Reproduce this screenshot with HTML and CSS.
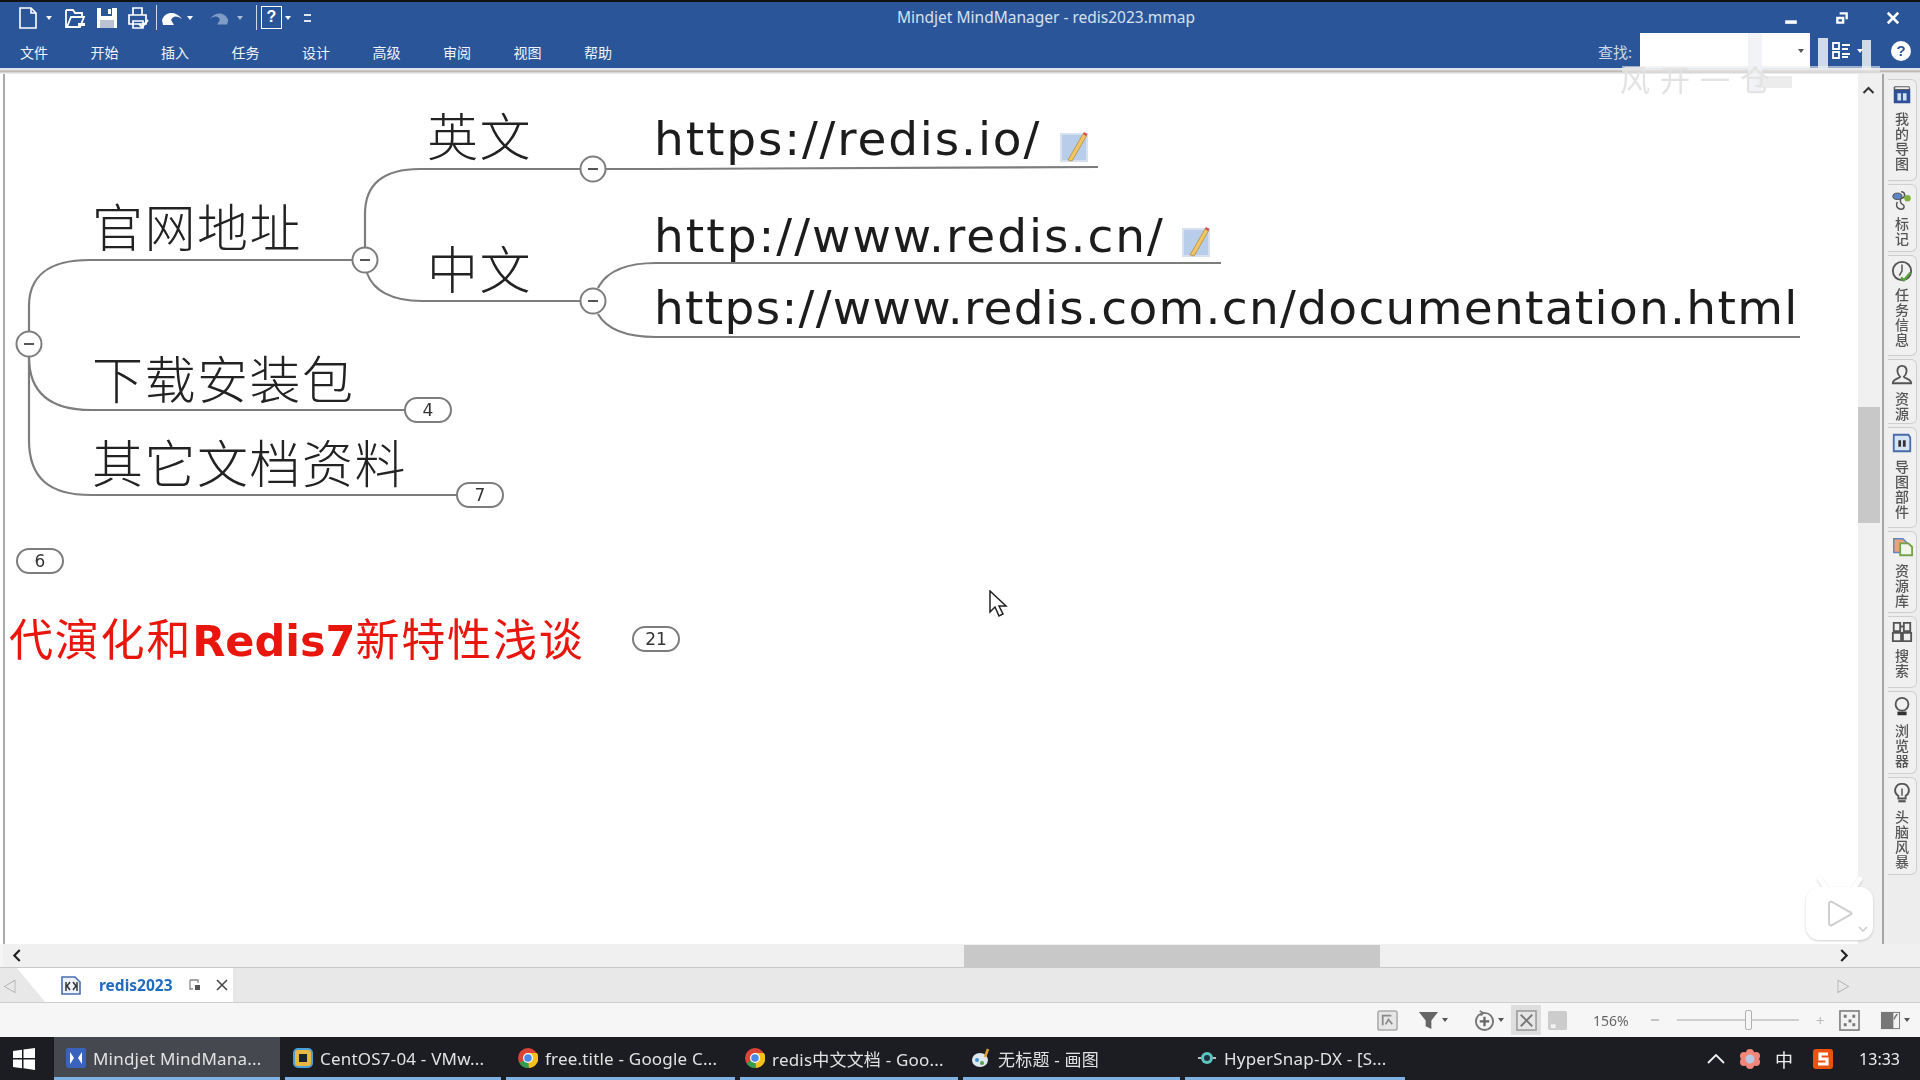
FILE: index.html
```
<!DOCTYPE html>
<html lang="zh">
<head>
<meta charset="utf-8">
<title>Mindjet MindManager - redis2023.mmap</title>
<link rel="stylesheet" href="styles.css">
</head>
<body>
<div class="app">
  <header class="ribbon">
    <div class="titlerow">
      <div class="qat">
        <svg class="q q-new" viewBox="0 0 20 24"><path d="M2 2h11l5 5v15H2z M13 2v5h5" fill="none" stroke="#fff" stroke-width="1.6"/></svg>
        <i class="caret"></i>
        <svg class="q q-open" viewBox="0 0 24 24"><path d="M3 4h7l2 3h7v4M3 4v17h14l4-10H8L4 21" fill="none" stroke="#fff" stroke-width="1.8"/><path d="M15 17h7v3h-7z" fill="#fff"/></svg>
        <svg class="q q-save" viewBox="0 0 22 24"><path d="M1 2h20v20H1z" fill="#fff"/><path d="M5 2h11v8H5z" fill="#2a5699"/><path d="M12 3h3v5h-3z" fill="#fff"/><path d="M4 14h14v8H4z" fill="#b9c3d2"/></svg>
        <svg class="q q-print" viewBox="0 0 24 24"><path d="M7 2h9v7H7zM3 9h17v9H3zM7 15h10v7H7z" fill="none" stroke="#fff" stroke-width="1.7"/><path d="M13 18l3 3 6-7" fill="none" stroke="#fff" stroke-width="2"/></svg>
        <span class="qsep"></span>
        <svg class="q q-undo" viewBox="0 0 24 20"><path d="M2 12c3-8 13-10 20-1-6-4-9-3-11 1l3 5H3z" fill="#fff"/></svg>
        <i class="caret"></i>
        <svg class="q q-redo" viewBox="0 0 24 20"><path d="M22 12c-3-8-13-10-20-1 6-4 9-3 11 1l-3 5h11z" fill="#7f9cc6"/></svg>
        <i class="caret dim"></i>
        <span class="qsep"></span>
        <span class="helpbox">?</span>
        <i class="caret"></i>
        <span class="qat-more"></span>
      </div>
      <div class="wintitle">Mindjet MindManager - redis2023.mmap</div>
      <div class="winctl">
        <svg viewBox="0 0 12 12"><path d="M1 8h10v3H1z" fill="#fff"/></svg>
        <svg viewBox="0 0 12 12"><path d="M4 1h7v6H9V3H4zM1 5h7v6H1zM3 7v2h3V7z" fill="#fff" fill-rule="evenodd"/></svg>
        <svg viewBox="0 0 12 12"><path d="M1.500 1.500l9 9m0-9l-9 9" stroke="#fff" stroke-width="2.200"/></svg>
      </div>
    </div>
    <div class="menurow">
      <nav class="menu">
        <span>文件</span><span>开始</span><span>插入</span><span>任务</span><span>设计</span><span>高级</span><span>审阅</span><span>视图</span><span>帮助</span>
      </nav>
      <div class="search">
        <span class="searchlabel">查找:</span>
        <div class="searchbox"><i class="caret dark"></i></div>
        <svg class="searchtool" viewBox="0 0 22 18"><path d="M2 1h6v6H2zM2 10h6v6H2zM11 3h8M11 7h6M11 12h8M11 15h6" fill="none" stroke="#fff" stroke-width="1.8"/></svg>
        <i class="caret"></i>
        <span class="helpround">?</span>
      </div>
    </div>
  </header>
  <div class="ribbonline"></div>

  <div class="workspace">
    <main class="canvas">
      <svg class="links" viewBox="0 74 1858 871">
        <g fill="none" stroke="#7d7d7d" stroke-width="2.2">
          <path d="M29 331V306c0-30 20-46 60-46H352"/>
          <path d="M29 357c0 35 20 53 62 53H405"/>
          <path d="M29 357V440c0 38 20 55 62 55H456"/>
          <path d="M365 247V214c0-30 18-45 55-45H580"/>
          <path d="M367 273c6 17 24 28 55 28H580"/>
          <path d="M606 169H655L1098 167"/>
          <path d="M598 288c8-16 25-25 58-25H1221"/>
          <path d="M598 314c8 14 25 23 58 23H1800"/>
        </g>
        <g fill="#fff" stroke="#7d7d7d" stroke-width="2">
          <circle cx="29" cy="344" r="12.500"/><circle cx="365" cy="260" r="12.500"/><circle cx="593" cy="169" r="12.500"/><circle cx="593" cy="301" r="12.500"/>
          <rect x="405" y="398" width="46" height="24" rx="12"/>
          <rect x="457" y="483" width="46" height="24" rx="12"/>
          <rect x="17" y="549" width="46" height="24" rx="12"/>
          <rect x="633" y="627" width="46" height="24" rx="12"/>
        </g>
        <path d="M24 344h10M360 260h10M588 169h10M588 301h10" stroke="#555" stroke-width="2"/>
      </svg>
      <div class="topic t-guanwang">官网地址</div>
      <div class="topic t-en">英文</div>
      <div class="topic t-cn">中文</div>
      <div class="topic t-xiazai">下载安装包</div>
      <div class="topic t-qita">其它文档资料</div>
      <div class="url u1">https://redis.io/</div>
      <div class="url u2">http://www.redis.cn/</div>
      <div class="url u3">https://www.redis.com.cn/documentation.html</div>
      <svg class="note n1" viewBox="0 0 32 32"><use href="#noteicon"/></svg>
      <svg class="note n2" viewBox="0 0 32 32"><use href="#noteicon"/></svg>
      <div class="count c4">4</div>
      <div class="count c7">7</div>
      <div class="count c6">6</div>
      <div class="count c21">21</div>
      <div class="redtopic">代演化和<b>Redis7</b>新特性浅谈</div>
      <svg class="cursor" viewBox="0 0 20 28"><path d="M2 1v21l5-5 4 9 4-2-4-8h7z" fill="#fff" stroke="#222" stroke-width="1.500"/></svg>
    </main>
    <aside class="vscroll">
      <svg class="vup" viewBox="0 0 12 8"><path d="M1 7l5-5 5 5" fill="none" stroke="#333" stroke-width="2"/></svg>
      <div class="vthumb"></div>
    </aside>
    <aside class="panel">
      <div class="ptab h1"><svg viewBox="0 0 24 24"><path d="M3 3h8l2 2h8v16H3z" fill="#2f4f96"/><path d="M4 3h16v3H4z" fill="#eee" stroke="#555"/><path d="M7 10h4v8H7zM13 10h4v8h-4z" fill="#cfe0f5"/></svg><span>我的导图</span></div>
      <div class="ptab h2"><svg viewBox="0 0 24 24"><ellipse cx="7" cy="8" rx="5" ry="3.500" fill="#5c86c6" stroke="#444"/><path d="M11 3c5 0 5 6 1 7-3 1-2 6 1 7 2 1 2 5-2 5-5 0-6-5-4-8" fill="none" stroke="#555" stroke-width="1.600"/><circle cx="18" cy="10" r="3.500" fill="#7fb03e"/></svg><span>标记</span></div>
      <div class="ptab h3"><svg viewBox="0 0 24 24"><circle cx="12" cy="12" r="10" fill="none" stroke="#555" stroke-width="2"/><path d="M12 5v7l-3 5" fill="none" stroke="#555" stroke-width="1.600"/><path d="M11 19l3 3 7-8" fill="none" stroke="#5aa43a" stroke-width="2.600"/></svg><span>任务信息</span></div>
      <div class="ptab h4"><svg viewBox="0 0 24 24"><path d="M12 2c4 0 5 3 5 6s-2 5-3 6c1 2 8 2 8 7H2c0-5 7-5 8-7-1-1-3-3-3-6s1-6 5-6z" fill="none" stroke="#555" stroke-width="2"/></svg><span>资源</span></div>
      <div class="ptab h5"><svg viewBox="0 0 24 24"><path d="M3 3h16l2 3v15H3z" fill="#d6e4f7" stroke="#4a6aa8" stroke-width="2"/><path d="M8 9h3v7H8zM13 9h3v7h-3z" fill="#333"/></svg><span>导图部件</span></div>
      <div class="ptab h6"><svg viewBox="0 0 24 24"><path d="M3 3h10l6 6v9H3z" fill="#e8a37a" stroke="#5c86c6" stroke-width="1.500"/><path d="M10 8h9l4 4v9H10z" fill="#f3f5ea" stroke="#73a44a" stroke-width="2"/></svg><span>资源库</span></div>
      <div class="ptab h7"><svg viewBox="0 0 24 24"><path d="M3 2h7v9H3zM14 2h7v9h-7zM2 13h9v9H2zM13 13h9v9h-9zM10 6h4M11 17h2" fill="none" stroke="#555" stroke-width="2"/></svg><span>搜索</span></div>
      <div class="ptab h8"><svg viewBox="0 0 24 24"><circle cx="12" cy="9" r="7" fill="none" stroke="#555" stroke-width="2"/><path d="M7 17h10v4H7z" fill="#333"/></svg><span>浏览器</span></div>
      <div class="ptab h9"><svg viewBox="0 0 24 24"><path d="M12 2a7 7 0 0 0-4 13v3h8v-3a7 7 0 0 0-4-13z" fill="none" stroke="#555" stroke-width="2"/><path d="M8 21h8" stroke="#555" stroke-width="2.400"/><path d="M12 7v8" stroke="#555" stroke-width="1.600"/></svg><span>头脑风暴</span></div>
    </aside>
    <svg class="wm-marks" viewBox="0 0 265 64"><path d="M0 36h258v6H0z" fill="#ececec" opacity=".6"/><path d="M126 3h14v58h-14zM196 8h10v30h-10zM240 10h9v30h-9z" fill="#eef1f5" opacity=".85"/><path d="M136 46h34v12h-34z" fill="#ececec"/></svg>
    <div class="watermark">风开一仓</div>
    <svg class="playmark" viewBox="0 0 70 66"><path d="M22 13L15 3M48 13l7-10" stroke="#fff" stroke-width="5" stroke-linecap="round"/><rect x="1" y="11" width="67" height="53" rx="13" fill="#fff"/><path d="M27 26c-2-1-3 0-3 2v19c0 2 1 3 3 2l18-10c2-1 2-2 0-3z" fill="#fff" stroke="#cfcfcf" stroke-width="2"/><path d="M54 51l4 4 4-4" fill="none" stroke="#ccc" stroke-width="1.500"/></svg>
  </div>

  <div class="hscroll">
    <svg class="harrow" viewBox="0 0 8 12"><path d="M7 1L2 6l5 5" fill="none" stroke="#222" stroke-width="2"/></svg>
    <div class="hthumb"></div>
    <svg class="harrow right" viewBox="0 0 8 12"><path d="M1 1l5 5-5 5" fill="none" stroke="#222" stroke-width="2"/></svg>
  </div>

  <div class="tabbar">
    <span class="tabscroll">◁</span>
    <div class="doctab">
      <svg class="docicon" viewBox="0 0 24 24"><path d="M3 4h13l5 5v12H3z" fill="#eef3fb" stroke="#4a6fae" stroke-width="1.600"/><path d="M7 9v9M11 9l-3 4 3 4M14 9l3 4-3 4M18 9v9" fill="none" stroke="#333" stroke-width="1.500"/></svg>
      <span class="docname">redis2023</span>
      <svg class="docpin" viewBox="0 0 12 12"><path d="M1 1h8v3M1 1v9h3" fill="none" stroke="#888" stroke-width="1.300"/><path d="M6 6h5v5H6z" fill="#555"/></svg>
      <svg class="docclose" viewBox="0 0 12 12"><path d="M1 1l10 10m0-10L1 11" stroke="#444" stroke-width="1.500"/></svg>
    </div>
    <span class="tabscroll right">▷</span>
  </div>

  <footer class="statusbar">
    <svg class="st s-a" viewBox="0 0 22 22"><rect x="1" y="1" width="20" height="20" rx="2" fill="#e6e6e6" stroke="#aaa" stroke-width="1.600"/><path d="M6 16V6h9M9 15l3-5 4 5" fill="none" stroke="#888" stroke-width="1.800"/></svg>
    <svg class="st s-b" viewBox="0 0 22 22"><path d="M1 2h20l-7 9v9l-6-3v-6z" fill="#666"/></svg>
    <i class="caret dark"></i>
    <svg class="st s-c" viewBox="0 0 22 22"><circle cx="11" cy="12" r="9" fill="none" stroke="#777" stroke-width="2"/><path d="M6 12h10M11 7v10" stroke="#666" stroke-width="2.400"/><path d="M6 1l4 2-3 3" fill="none" stroke="#777" stroke-width="1.600"/></svg>
    <i class="caret dark"></i>
    <span class="stbox"><svg class="st" viewBox="0 0 22 22"><rect x="1" y="1" width="20" height="20" fill="#e6e6e6" stroke="#999" stroke-width="1.600"/><path d="M5 5l12 12m0-12L5 17" stroke="#777" stroke-width="2"/></svg></span>
    <svg class="st s-d" viewBox="0 0 22 22"><rect x="1" y="1" width="20" height="20" rx="2" fill="#ccc"/><path d="M4 15h5v4H4z" fill="#f4f4f4"/></svg>
    <span class="zoomval">156%</span>
    <span class="zminus"></span>
    <div class="slider"><span class="knob"></span></div>
    <span class="zplus">+</span>
    <svg class="st s-e" viewBox="0 0 22 22"><rect x="1" y="1" width="20" height="20" fill="#f2f2f2" stroke="#777" stroke-width="1.600"/><path d="M5 5h3v3H5zM14 5h3v3h-3zM5 14h3v3H5zM14 14h3v3h-3zM10 10h3v3h-3z" fill="#777"/></svg>
    <svg class="st s-f" viewBox="0 0 22 22"><path d="M1 2h20v18H1z" fill="#777"/><path d="M14 3h6v16h-6z" fill="#f2f2f2"/><path d="M15 10c0-4 3-4 3-6" stroke="#777" stroke-width="1.500" fill="none"/></svg>
    <i class="caret dark"></i>
  </footer>

  <div class="taskbar">
    <svg class="startlogo" viewBox="0 0 24 24"><path d="M1 4l9-1.300V11H1zM11.500 2.500L23 1v10H11.500zM1 12.500h9v8.800L1 20zM11.500 12.500H23V23l-11.500-1.700z" fill="#fff"/></svg>
    <div class="tbi active w1"><svg viewBox="0 0 20 20"><rect width="20" height="20" rx="2" fill="#3a63bd"/><path d="M4 4v12l4-6zM16 4v12l-4-6z" fill="#fff"/></svg><span>Mindjet MindMana...</span></div>
    <div class="tbi w2"><svg viewBox="0 0 20 20"><rect x="1" y="1" width="18" height="18" rx="4" fill="#e8b93e" stroke="#4aa0d8" stroke-width="2"/><rect x="6" y="6" width="8" height="8" fill="#1c2330"/></svg><span>CentOS7-04 - VMw...</span></div>
    <div class="tbi w3"><svg viewBox="0 0 20 20"><use href="#chrome"/></svg><span>free.title - Google C...</span></div>
    <div class="tbi w4"><svg viewBox="0 0 20 20"><use href="#chrome"/></svg><span>redis中文文档 - Goo...</span></div>
    <div class="tbi w5"><svg viewBox="0 0 20 20"><ellipse cx="9" cy="12" rx="8" ry="7" fill="#dfe8ef"/><circle cx="6" cy="12" r="2" fill="#3f8fd0"/><circle cx="11" cy="15" r="2" fill="#4da24a"/><path d="M14 9l3-8" stroke="#e0a030" stroke-width="2.500"/></svg><span>无标题 - 画图</span></div>
    <div class="tbi w6"><svg viewBox="0 0 20 20"><circle cx="10" cy="10" r="6" fill="#5bc6c0"/><circle cx="10" cy="10" r="3" fill="#1f3040"/><path d="M1 10h3M16 10h3" stroke="#bbb" stroke-width="2"/></svg><span>HyperSnap-DX - [S...</span></div>
    <div class="tray">
      <svg class="up" viewBox="0 0 18 10"><path d="M1 9l8-8 8 8" fill="none" stroke="#eee" stroke-width="1.800"/></svg>
      <svg class="flower" viewBox="0 0 20 20"><g fill="#f2867a"><circle cx="10" cy="4" r="4"/><circle cx="10" cy="16" r="4"/><circle cx="4" cy="7" r="4"/><circle cx="16" cy="7" r="4"/><circle cx="4" cy="13" r="4"/><circle cx="16" cy="13" r="4"/></g><circle cx="10" cy="10" r="4.500" fill="#b5c9e2"/></svg>
      <span class="ime">中</span>
      <svg class="sogou" viewBox="0 0 22 22"><rect x="1" y="1" width="20" height="20" rx="3" fill="#e8540f"/><path d="M16 6H8v5h7v5H6" fill="none" stroke="#fff" stroke-width="3.200"/></svg>
      <span class="clock">13:33</span>
    </div>
  </div>
</div>

<svg class="defs" width="0" height="0">
  <defs>
    <g id="noteicon">
      <rect x="2" y="4" width="26" height="27" fill="#b7cdea" stroke="#d6e0ee" stroke-width="2"/>
      <path d="M9 30L24 4l3.500 2L13 31z" fill="#efc565" stroke="#b58e3a" stroke-width=".8"/>
      <path d="M24 4l1-2 3.500 2-1 2z" fill="#d8504a"/>
    </g>
    <g id="chrome">
      <circle cx="10" cy="10" r="10" fill="#dc4437"/>
      <path d="M10 10L1.500 15a10 10 0 0 0 9.500 5z" fill="#2e9e50"/>
      <path d="M10 10l1 10a10 10 0 0 0 8-15H10z" fill="#f3c01e"/>
      <circle cx="10" cy="10" r="5" fill="#fff"/><circle cx="10" cy="10" r="3.800" fill="#4a89e8"/>
    </g>
  </defs>
</svg>
</body>
</html>
```

FILE: styles.css
```
* { box-sizing: border-box; }
html, body { margin: 0; height: 100%; overflow: hidden; background: #f5f5f5; }
body { font-family: "Noto Sans", "Noto Sans CJK SC", sans-serif; }
.defs { position: absolute; }

.app { width: 1920px; height: 1080px; display: flex; flex-direction: column; filter: blur(.6px); overflow: hidden; }

/* ribbon */
.ribbon { height: 68px; background: #2a5699; border-top: 2px solid #111; display: flex; flex-direction: column; color: #fff; }
.ribbonline { height: 6px; background: linear-gradient(#dfe5ee 0, #dfe5ee 33%, #b7aca0 50%, #d8d8d8 75%, #f4f4f4 100%); }
.titlerow { height: 31px; position: relative; display: flex; align-items: center; padding-left: 18px; }
.qat { display: flex; align-items: center; height: 100%; }
.q { display: block; width: 24px; height: 24px; }
.q-new { width: 20px; margin-right: 5px; }
.q-open { margin-left: 11px; }
.q-save { margin-left: 9px; width: 22px; }
.q-print { margin-left: 8px; }
.q-undo { margin-left: 3px; width: 24px; height: 20px; }
.q-redo { margin-left: 15px; width: 22px; height: 20px; }
.qsep { width: 1px; height: 25px; background: #cfd9e8; margin-left: 6px; }
.caret { display: block; width: 0; height: 0; border: 3.5px solid transparent; border-top: 4px solid #fff; border-bottom: 0; margin-left: 3px; }
.caret.dim { border-top-color: #a9bcd8; margin-left: 7px; margin-right: 7px; }
.caret.dark { border-top-color: #555; }
.helpbox { margin-left: 4px; width: 21px; height: 23px; border: 1.5px solid #fff; font: bold 16px/20px "Liberation Sans", sans-serif; text-align: center; }
.qat-more { display: block; width: 7px; height: 8px; margin-left: 13px; border-top: 2px solid #dfe6f2; border-bottom: 2px solid #dfe6f2; }
.wintitle { position: absolute; left: 746px; top: 5px; width: 600px; text-align: center; font-size: 15.500px; line-height: 20px; color: #d7e0ee; pointer-events: none; }
.winctl { margin-left: auto; display: flex; gap: 37px; padding-right: 20px; }
.winctl svg { width: 14px; height: 14px; display: block; }

.menurow { flex: 1; display: flex; align-items: flex-start; justify-content: space-between; }
.menu { display: flex; padding-left: 20px; padding-top: 10px; }
.menu span { width: 70.500px; font-size: 14px; line-height: 20px; color: #f1f4fa; }
.search { display: flex; align-items: center; padding-right: 9px; }
.searchlabel { font-size: 15px; color: #cdd8e8; margin-right: 8px; padding-top: 2px; }
.searchbox { width: 170px; height: 35px; background: #fff; display: flex; align-items: center; justify-content: flex-end; padding-right: 6px; }
.searchtool { width: 22px; height: 18px; margin-left: 21px; }
.search .caret { margin-left: 4px; }
.searchbox .caret { margin-left: 0; }
.helpround { width: 20px; height: 20px; margin-left: 28px; border-radius: 50%; background: #fff; color: #2a5699; font: bold 15px/20px "Liberation Sans", sans-serif; text-align: center; }

/* workspace */
.workspace { flex: 1; display: flex; position: relative; min-height: 0; }
.canvas { width: 1858px; position: relative; background: #fff; overflow: hidden; }
.canvas::before { content: ""; position: absolute; left: 3px; top: 0; bottom: 0; width: 2px; background: #a9a9a9; }
.links { position: absolute; left: 0; top: 0; width: 1858px; height: 871px; }
.topic { position: absolute; font-family: "Noto Sans CJK SC", sans-serif; font-weight: 300; font-size: 51px; letter-spacing: 1.500px; line-height: 60px; color: #222; white-space: nowrap; }
.t-guanwang { left: 92px; top: 121px; }
.t-en { left: 427px; top: 30px; }
.t-cn { left: 427px; top: 163px; }
.t-xiazai { left: 92px; top: 273px; }
.t-qita { left: 92px; top: 357px; }
.url { position: absolute; left: 654px; font-family: "DejaVu Sans", sans-serif; font-size: 47px; line-height: 56px; color: #1c1c1c; white-space: nowrap; }
.u1 { top: 37px; letter-spacing: 1.850px; }
.u2 { top: 134px; letter-spacing: 2px; }
.u3 { top: 206px; letter-spacing: 1.300px; }
.note { position: absolute; width: 32px; height: 32px; }
.n1 { left: 1059px; top: 56px; }
.n2 { left: 1181px; top: 151px; }
.count { position: absolute; width: 46px; text-align: center; font-family: "DejaVu Sans", sans-serif; font-size: 17px; line-height: 24px; color: #333; }
.c4 { left: 405px; top: 324px; }
.c7 { left: 457px; top: 409px; }
.c6 { left: 17px; top: 475px; }
.c21 { left: 633px; top: 553px; }
.redtopic { position: absolute; left: 9px; top: 533px; font-family: "Noto Sans CJK SC", sans-serif; font-size: 44px; line-height: 60px; letter-spacing: 1.800px; color: #e8160c; white-space: nowrap; }
.redtopic b { font-family: "DejaVu Sans", sans-serif; font-size: 43px; font-weight: 700; letter-spacing: 0; }
.cursor { position: absolute; left: 988px; top: 516px; width: 20px; height: 28px; }
.watermark { position: absolute; left: 1620px; top: -14px; font-size: 30px; line-height: 40px; letter-spacing: 10px; color: #e3e3e3; white-space: nowrap; }
.wm-marks { position: absolute; left: 1622px; top: -44px; width: 265px; height: 64px; }

.vscroll { width: 26px; background: #f0f0f0; border-right: 2px solid #a5a5a5; position: relative; padding-top: 333px; }
.vup { position: absolute; left: 4px; top: 12px; width: 13px; height: 8px; }
.vthumb { width: 22px; height: 116px; background: #c8c8c8; }

.panel { flex: 1; background: #ededed; padding: 5px 0 0 4px; display: flex; flex-direction: column; gap: 3px; }
.ptab { width: 29px; background: #f0f0f0; border: 1px solid #cfcfcf; border-left: 0; border-radius: 0 6px 6px 0; display: flex; flex-direction: column; align-items: center; padding-top: 4px; gap: 6px; }
.ptab svg { width: 22px; height: 22px; flex: none; }
.ptab span { writing-mode: vertical-rl; font-size: 14px; line-height: 16px; color: #555; letter-spacing: 1px; font-family: "Noto Sans CJK SC", sans-serif; font-weight: 500; }
.h1 { height: 102px; } .h2 { height: 68px; } .h3 { height: 101px; } .h4 { height: 65px; }
.h5 { height: 101px; } .h6 { height: 82px; } .h7 { height: 72px; } .h8 { height: 83px; } .h9 { height: 98px; }
.playmark { position: absolute; left: 1805px; top: 802px; width: 70px; height: 66px; filter: drop-shadow(0 1px 1px rgba(0,0,0,.18)); }

.hscroll { height: 23px; background: #f0f0f0; position: relative; display: flex; align-items: center; padding-left: 9px; border-left: 3px solid transparent; background-clip: padding-box; }
.harrow { width: 9px; height: 13px; display: block; flex: none; }
.hthumb { width: 416px; height: 22px; background: #c8c8c8; margin-left: 943px; }
.harrow.right { margin-left: 460px; }

.tabbar { height: 36px; background: #e8e8e8; border-top: 1px solid #c9c9c9; border-bottom: 1px solid #cfcfcf; display: flex; align-items: center; padding-left: 3px; }
.tabscroll { font-size: 14px; color: #999; width: 14px; }
.tabscroll.right { margin-left: auto; margin-right: 70px; }
.doctab { height: 34px; width: 216px; background: #fff; clip-path: polygon(0 0, 6% 0, 100% 0, 100% 100%, 13% 100%); display: flex; align-items: center; padding-left: 42px; }
.docicon { width: 24px; height: 24px; flex: none; }
.docname { margin-left: 16px; font-size: 15.500px; font-weight: 700; color: #1f6cc0; line-height: 20px; }
.docpin { width: 12px; height: 12px; margin-left: 16px; flex: none; }
.docclose { width: 12px; height: 12px; margin-left: 15px; flex: none; }

.statusbar { height: 34px; background: #f6f6f6; display: flex; align-items: center; padding-left: 1377px; }
.st { width: 21px; height: 21px; display: block; flex: none; }
.s-b { margin-left: 20px; }
.statusbar .caret { margin-left: 3px; }
.s-c { margin-left: 26px; }
.stbox { width: 30px; height: 30px; margin-left: 7px; background: #dedede; display: flex; align-items: center; justify-content: center; }
.s-d { margin-left: 6px; }
.zoomval { font-size: 14px; color: #666; margin-left: 25px; width: 36px; }
.zminus { width: 8px; height: 2px; background: #c4c4c4; margin-left: 22px; }
.slider { width: 122px; height: 2px; background: #cfcfcf; margin-left: 18px; position: relative; }
.knob { position: absolute; left: 68px; top: -9px; width: 7px; height: 20px; background: #f6f6f6; border: 1px solid #b0b0b0; border-radius: 2px; }
.zplus { font-size: 15px; color: #bbb; margin-left: 17px; width: 10px; }
.s-e { margin-left: 13px; }
.s-f { margin-left: 20px; }

.taskbar { height: 43px; background: #1b1d22; display: flex; align-items: stretch; }
.startlogo { width: 24px; height: 24px; margin: 10px 18px 0 12px; flex: none; }
.tbi { display: flex; align-items: center; gap: 7px; padding: 2px 0 0 12px; margin-right: 5px; border-bottom: 3px solid #7fb2e0; font-size: 17px; letter-spacing: .2px; color: #e2e2e2; white-space: nowrap; flex: none; }
.tbi svg { width: 20px; height: 20px; flex: none; }
.tbi.active { background: #45484f; }
.w1 { width: 226px; } .w2 { width: 216px; padding-left: 8px; } .w3 { width: 229px; } .w4 { width: 218px; padding-left: 5px; } .w5 { width: 217px; padding-left: 8px; } .w6 { width: 220px; padding-left: 12px; }
.tray { margin-left: auto; display: flex; align-items: center; padding-right: 20px; color: #eee; }
.up { width: 18px; height: 10px; }
.flower { width: 20px; height: 20px; margin-left: 15px; }
.ime { font-size: 18px; margin-left: 15px; font-family: "Noto Sans CJK SC", sans-serif; }
.sogou { width: 22px; height: 22px; margin-left: 19px; }
.clock { font-size: 16px; margin-left: 25px; }
```
